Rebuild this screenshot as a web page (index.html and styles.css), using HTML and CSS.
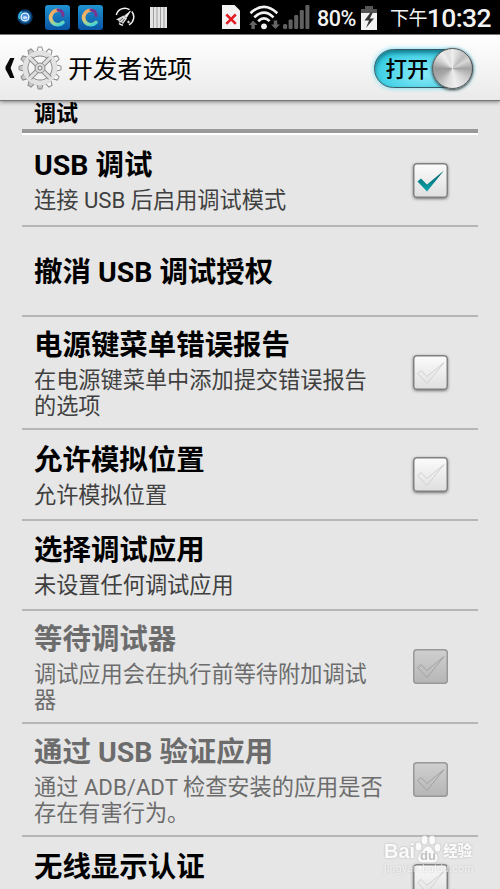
FILE: index.html
```html
<!DOCTYPE html>
<html lang="zh-CN">
<head>
<meta charset="utf-8">
<title>开发者选项</title>
<link rel="stylesheet" href="styles.css">
</head>
<body>
<svg class="defs" width="0" height="0">
  <defs>
    <linearGradient id="appBg" x1="0" y1="0" x2="0" y2="1"><stop offset="0" stop-color="#1f93d2"/><stop offset="1" stop-color="#0a55a4"/></linearGradient>
    <linearGradient id="ring" gradientUnits="userSpaceOnUse" x1="8" y1="4" x2="15" y2="21"><stop offset="0" stop-color="#f6a25c"/><stop offset="0.45" stop-color="#e8c070"/><stop offset="0.75" stop-color="#8fd8a0"/><stop offset="1" stop-color="#38d0dc"/></linearGradient>
    <linearGradient id="metal" x1="0" y1="0" x2="0" y2="1"><stop offset="0" stop-color="#fafafa"/><stop offset="1" stop-color="#c4c4c4"/></linearGradient>
    <linearGradient id="teal" x1="0" y1="0" x2="0" y2="1"><stop offset="0" stop-color="#045e66"/><stop offset="1" stop-color="#0aa5ad"/></linearGradient>
    <symbol id="app" viewBox="0 0 25 25">
      <rect width="25" height="25" rx="3" fill="url(#appBg)"/>
      <path d="M18 17.500A7.200 7.200 0 1 1 13 5.300" fill="none" stroke="url(#ring)" stroke-width="3.600" stroke-linecap="round"/>
      <path d="M13 5Q18 5.500 18 10.500" fill="none" stroke="#7b3590" stroke-width="3" stroke-linecap="round"/>
    </symbol>
    <symbol id="tick" viewBox="0 0 35 35">
      <path d="M4.500 18.500 8 15.600 14 21.500 31 7.500 14 28.500Z"/>
    </symbol>
  </defs>
</svg>
<div class="screen">
  <header class="status">
    <div class="notices">
      <svg class="orb" width="16" height="16" viewBox="0 0 16 16"><circle cx="8" cy="8" r="7" fill="#125f9d" stroke="#0a3563" stroke-width="1.5"/><path d="M2.5 10A6 6 0 0 1 5 2.6" fill="none" stroke="#35c2de" stroke-width="1.6"/><circle cx="8" cy="8" r="3.9" fill="#4f91e0" stroke="#e8f5ff" stroke-width="1.4"/><ellipse cx="8" cy="8.6" rx="2.2" ry="1.6" fill="#c5e1ff"/></svg>
      <svg width="25" height="25"><use href="#app"/></svg>
      <svg width="25" height="25"><use href="#app"/></svg>
      <svg class="gauge" width="20" height="20" viewBox="0 0 20 20" fill="none" stroke="#f2f2f2"><path d="M1.300 8A8.800 8.800 0 0 1 14.500 2.600M16.800 4.500A8.800 8.800 0 0 1 14 17.800M8 18.300A8.800 8.800 0 0 1 4 16.500" stroke-width="1.500"/><path d="M15.500 4 11.500 10.500 9.500 9Z" fill="#f2f2f2" stroke-width=".8"/><path d="M8.500 8.500 12 11.500 8 17 6.500 15.500 4 15.500 3.500 13.500 1 12.500Z" fill="#ddd" stroke="none"/><path d="M8 11 4.500 14M9.500 12 7 15.500" stroke="#111" stroke-width=".7"/><circle cx="13.500" cy="15" r=".8" fill="#f2f2f2"/></svg>
      <svg width="17" height="21"><path d="M0 0h17v21H0z" fill="#e4e4e4"/><path d="M3.500 0v21M7 0v21M10.500 0v21M14 0v21" stroke="#8c8c8c" stroke-width=".8"/></svg>
    </div>
    <div class="signals">
      <svg class="sim" width="18" height="24"><path d="M0 0h12.500L18 5.500V24H0z" fill="#f3f3f3"/><path d="M4.300 9.500l9.500 9.300M13.800 9.500l-9.500 9.300" stroke="#e31b23" stroke-width="2.500"/></svg>
      <svg class="wifi" width="31" height="25" viewBox="0 0 31 25"><g fill="none" stroke="#f3f3f3" stroke-width="2.600"><path d="M1.500 8.200Q15 -4.500 28.300 8.200M5.300 12.400Q15 3 24.500 12.400M9.200 16.200Q15 10.500 20.600 16.200"/></g><circle cx="15" cy="21.300" r="2.900" fill="#f3f3f3"/><path d="M4 15.500 8.500 20H5.800v4H2.400v-4H0zM26.500 24 31 19.500h-2.700v-4h-3.500v4H22z" fill="#666"/></svg>
      <svg class="cell" width="27" height="24" fill="#606060"><rect y="19" width="4.200" height="5" rx="1.500"/><rect x="5.600" y="14.500" width="4" height="9.500" rx="1.200"/><rect x="11.200" y="10" width="4" height="14" rx="1.200"/><rect x="16.800" y="5" width="4" height="19" rx="1.200"/><rect x="22.400" width="4" height="24" rx="1.200"/></svg>
      <span class="battery-level">80%</span>
      <svg class="battery" width="16" height="24"><path d="M4 0h8v3h4v21H0V3h4z" fill="#f3f3f3"/><path d="M4 0h8v3h4v4H0V3h4z" fill="#555"/><path d="M9.500 6.500 3.500 14.500H8L5 22l8-9.500H8.800l3-6z" fill="#333"/></svg>
      <span class="clock"><small>下午</small>10:32</span>
    </div>
  </header>
  <div class="bar">
    <svg class="back" width="10" height="20"><path d="M5.200 0H9.400L5.600 10l3.800 10H5.200L.5 11.200V8.800z" fill="#080808"/></svg>
    <svg class="gear" width="44" height="44" viewBox="-22 -22 44 44">
      <g fill="url(#metal)" stroke="#8a8a8a">
        <path d="M-3.200-16-1.800-21H1.800L3.200-16zM-3.200 16-1.800 21H1.800L3.200 16z"/>
        <path transform="rotate(30)" d="M-3.200-16-1.800-21H1.800L3.200-16zM-3.200 16-1.800 21H1.800L3.200 16z"/>
        <path transform="rotate(60)" d="M-3.200-16-1.800-21H1.800L3.200-16zM-3.200 16-1.800 21H1.800L3.200 16z"/>
        <path transform="rotate(90)" d="M-3.200-16-1.800-21H1.800L3.200-16zM-3.200 16-1.800 21H1.800L3.200 16z"/>
        <path transform="rotate(120)" d="M-3.200-16-1.800-21H1.800L3.200-16zM-3.200 16-1.800 21H1.800L3.200 16z"/>
        <path transform="rotate(150)" d="M-3.200-16-1.800-21H1.800L3.200-16zM-3.200 16-1.800 21H1.800L3.200 16z"/>
      </g>
      <g fill="none"><circle r="14.300" stroke="#858585" stroke-width="5.400"/><circle r="14.900" stroke="#e2e2e2" stroke-width="4.800"/>
      <path d="M-10-10 10 10M10-10-10 10" stroke="#858585" stroke-width="5"/><path d="M-10.800-10.800 10.800 10.800M10.800-10.800-10.800 10.800" stroke="#dedede" stroke-width="3.200"/></g>
      <circle r="5" fill="#dcdcdc" stroke="#8c8c8c"/><circle r="2" fill="#f4f4f4" stroke="#777"/>
    </svg>
    <h1>开发者选项</h1>
    <div class="switch"><span>打开</span><i class="knob"></i></div>
  </div>
  <main>
    <h2>调试</h2>
    <section class="row"><div><h3>USB 调试</h3><p>连接 USB 后启用调试模式</p></div><span class="check on"><svg width="35" height="35"><use href="#tick"/></svg></span></section>
    <section class="row"><div><h3>撤消 USB 调试授权</h3></div></section>
    <section class="row tall"><div><h3>电源键菜单错误报告</h3><p>在电源键菜单中添加提交错误报告<br>的选项</p></div><span class="check"><svg width="35" height="35"><use href="#tick"/></svg></span></section>
    <section class="row"><div><h3>允许模拟位置</h3><p>允许模拟位置</p></div><span class="check"><svg width="35" height="35"><use href="#tick"/></svg></span></section>
    <section class="row"><div><h3>选择调试应用</h3><p>未设置任何调试应用</p></div></section>
    <section class="row tall off"><div><h3>等待调试器</h3><p>调试应用会在执行前等待附加调试<br>器</p></div><span class="check"><svg width="35" height="35"><use href="#tick"/></svg></span></section>
    <section class="row tall off"><div><h3>通过 USB 验证应用</h3><p>通过 ADB/ADT 检查安装的应用是否<br>存在有害行为。</p></div><span class="check"><svg width="35" height="35"><use href="#tick"/></svg></span></section>
    <section class="row last"><div><h3>无线显示认证</h3></div><span class="check"><svg width="35" height="35"><use href="#tick"/></svg></span></section>
  </main>
  <div class="mark">
    <div class="mark-name"><b>Bai</b><svg width="26" height="28" viewBox="0 0 26 28"><g fill="#fff"><ellipse cx="3.500" cy="11.500" rx="2.900" ry="4"/><ellipse cx="9.500" cy="5" rx="3" ry="4.400"/><ellipse cx="17.200" cy="5" rx="3" ry="4.400"/><ellipse cx="22.500" cy="12.800" rx="2.900" ry="4"/><path d="M13 11.500c4 0 4 4 7.500 7 5 5 1 9.500-3 9h-9c-5 .5-8-4.500-3-9 3.500-3 3.500-7 7.500-7z"/></g><text x="13" y="25" text-anchor="middle" class="du">du</text></svg><b class="cn">经验</b></div>
    <div class="mark-url">jingyan.baidu.com</div>
  </div>
</div>
</body>
</html>
```
FILE: styles.css
```css
* { box-sizing: border-box; margin: 0; padding: 0; }
body { width: 500px; height: 889px; overflow: hidden; background: #e6e6e6; font-family: Roboto, "Noto Sans CJK SC", sans-serif; color: #000; }
svg { display: block; flex: none; }
.defs { position: absolute; }
.screen { position: relative; height: 889px; overflow: hidden; display: flex; flex-direction: column; }

.status { flex: none; height: 34px; background: #000; color: #f3f3f3; display: flex; justify-content: space-between; padding: 0 9px 0 17px; }
.notices, .signals { display: flex; align-items: center; }
.notices { gap: 8px; }
.orb { margin-right: 4px; }
.gauge { margin: 0 7px 0 4px; }
.signals { white-space: nowrap; }
.wifi { margin-left: 9px; }
.cell { margin-left: 3px; }
.battery-level { font-weight: 500; font-size: 21.500px; line-height: 34px; width: 38px; margin: 3px 0 0 7px; letter-spacing: -.5px; }
.battery { margin-left: 6px; margin-top: 1px; }
.clock { display: flex; align-items: center; justify-content: space-between; width: 101px; font-weight: 500; font-size: 26.500px; letter-spacing: -.6px; line-height: 34px; margin: 2px 0 0 13px; }
.clock small { font-size: 19px; font-weight: 400; letter-spacing: -.6px; margin-top: 2px; }

.bar { flex: none; height: 67px; display: flex; align-items: center; padding: 1px 27px 0 5px; background: linear-gradient(#fff, #eaeaea); border-top: 1px solid #777; border-bottom: 1px solid #777; box-shadow: 0 1px 4px rgba(0,0,0,.45); z-index: 1; }
.gear { margin-left: 3px; }
h1 { font-size: 24.800px; font-weight: 400; line-height: 34px; margin: 3px 0 0 6px; flex: 1; white-space: nowrap; }
.switch { position: relative; width: 99px; height: 39px; border-radius: 20px; border: 1px solid #365d66; background: radial-gradient(ellipse at 50% 65%, #8be9f7, #35cde3 75%); box-shadow: inset 0 3px 4px #167b8c, 0 0 5px #66d9f2; padding-left: 10.500px; font-size: 21.500px; font-weight: 500; line-height: 39px; }
.knob { position: absolute; right: -1px; top: -2px; width: 41px; height: 41px; border-radius: 50%; border: 1.500px solid #555; background: conic-gradient(#eee, #bbb 12%, #d8d8d8 17%, #a4a4a4 25%, #d0d0d0 35%, #eee 47%, #ddd 55%, #aaa 66%, #999 75%, #ccc 83%, #eee 90%, #ddd 95%, #eee); box-shadow: 0 1px 3px #333; }

main { padding: 0 22px; flex: none; }
h2 { height: 34px; padding: 0 12px; font-size: 22px; font-weight: 700; line-height: 26px; border-bottom: 2px solid #fff; position: relative; }
h2::after { content: ""; position: absolute; left: 0; right: 0; bottom: 0; height: 4px; background: #999; }
.row { height: 90.200px; border-bottom: 2px solid #b6b6b6; padding: 0 30px 0 12px; display: flex; align-items: center; justify-content: space-between; white-space: nowrap; }
.row:nth-of-type(1) { height: 92px; }
.row.tall { height: 113.300px; }
.row.off { color: #6c6c6c; }
h3 { font-size: 28.450px; font-weight: 700; line-height: 34px; position: relative; top: 2px; }
p { font-size: 22.200px; line-height: 26.500px; margin-top: 5px; color: #404040; position: relative; top: 1px; }
.off p { color: #6c6c6c; }
.check { width: 35px; height: 35px; border-radius: 4px; background: linear-gradient(#fcfcfc, #dedede); box-shadow: inset 0 0 0 1.500px #808080, 0 1px 3px rgba(0,0,0,.5); }
.check svg { fill: none; stroke: #d0d0d0; }
.check.on svg { fill: url(#teal); stroke: none; }
.off .check { background: linear-gradient(#d0d0d0, #b5b5b5); box-shadow: inset 0 0 0 1.500px #989898; }
.off .check svg { stroke: #a2a2a2; }
.row.last { align-items: flex-start; padding-top: 12px; border: 0; }
.last .check { margin-top: 15px; }

.mark { position: absolute; left: 384px; top: 835px; width: 94px; color: #fff; opacity: .8; filter: drop-shadow(0 0 1px #aaa); z-index: 2; }
.mark-name { display: flex; align-items: flex-end; font: 700 20px/24px "Liberation Sans", "Noto Sans CJK SC", sans-serif; }
.mark-name b { height: 24px; }
.mark-name .cn { font-size: 14.500px; margin-left: 2px; }
.du { font: 700 13px "Liberation Sans", sans-serif; fill: #b8b8b8; }
.mark-url { font-size: 10px; line-height: 12px; letter-spacing: .5px; opacity: .75; white-space: nowrap; }
```
